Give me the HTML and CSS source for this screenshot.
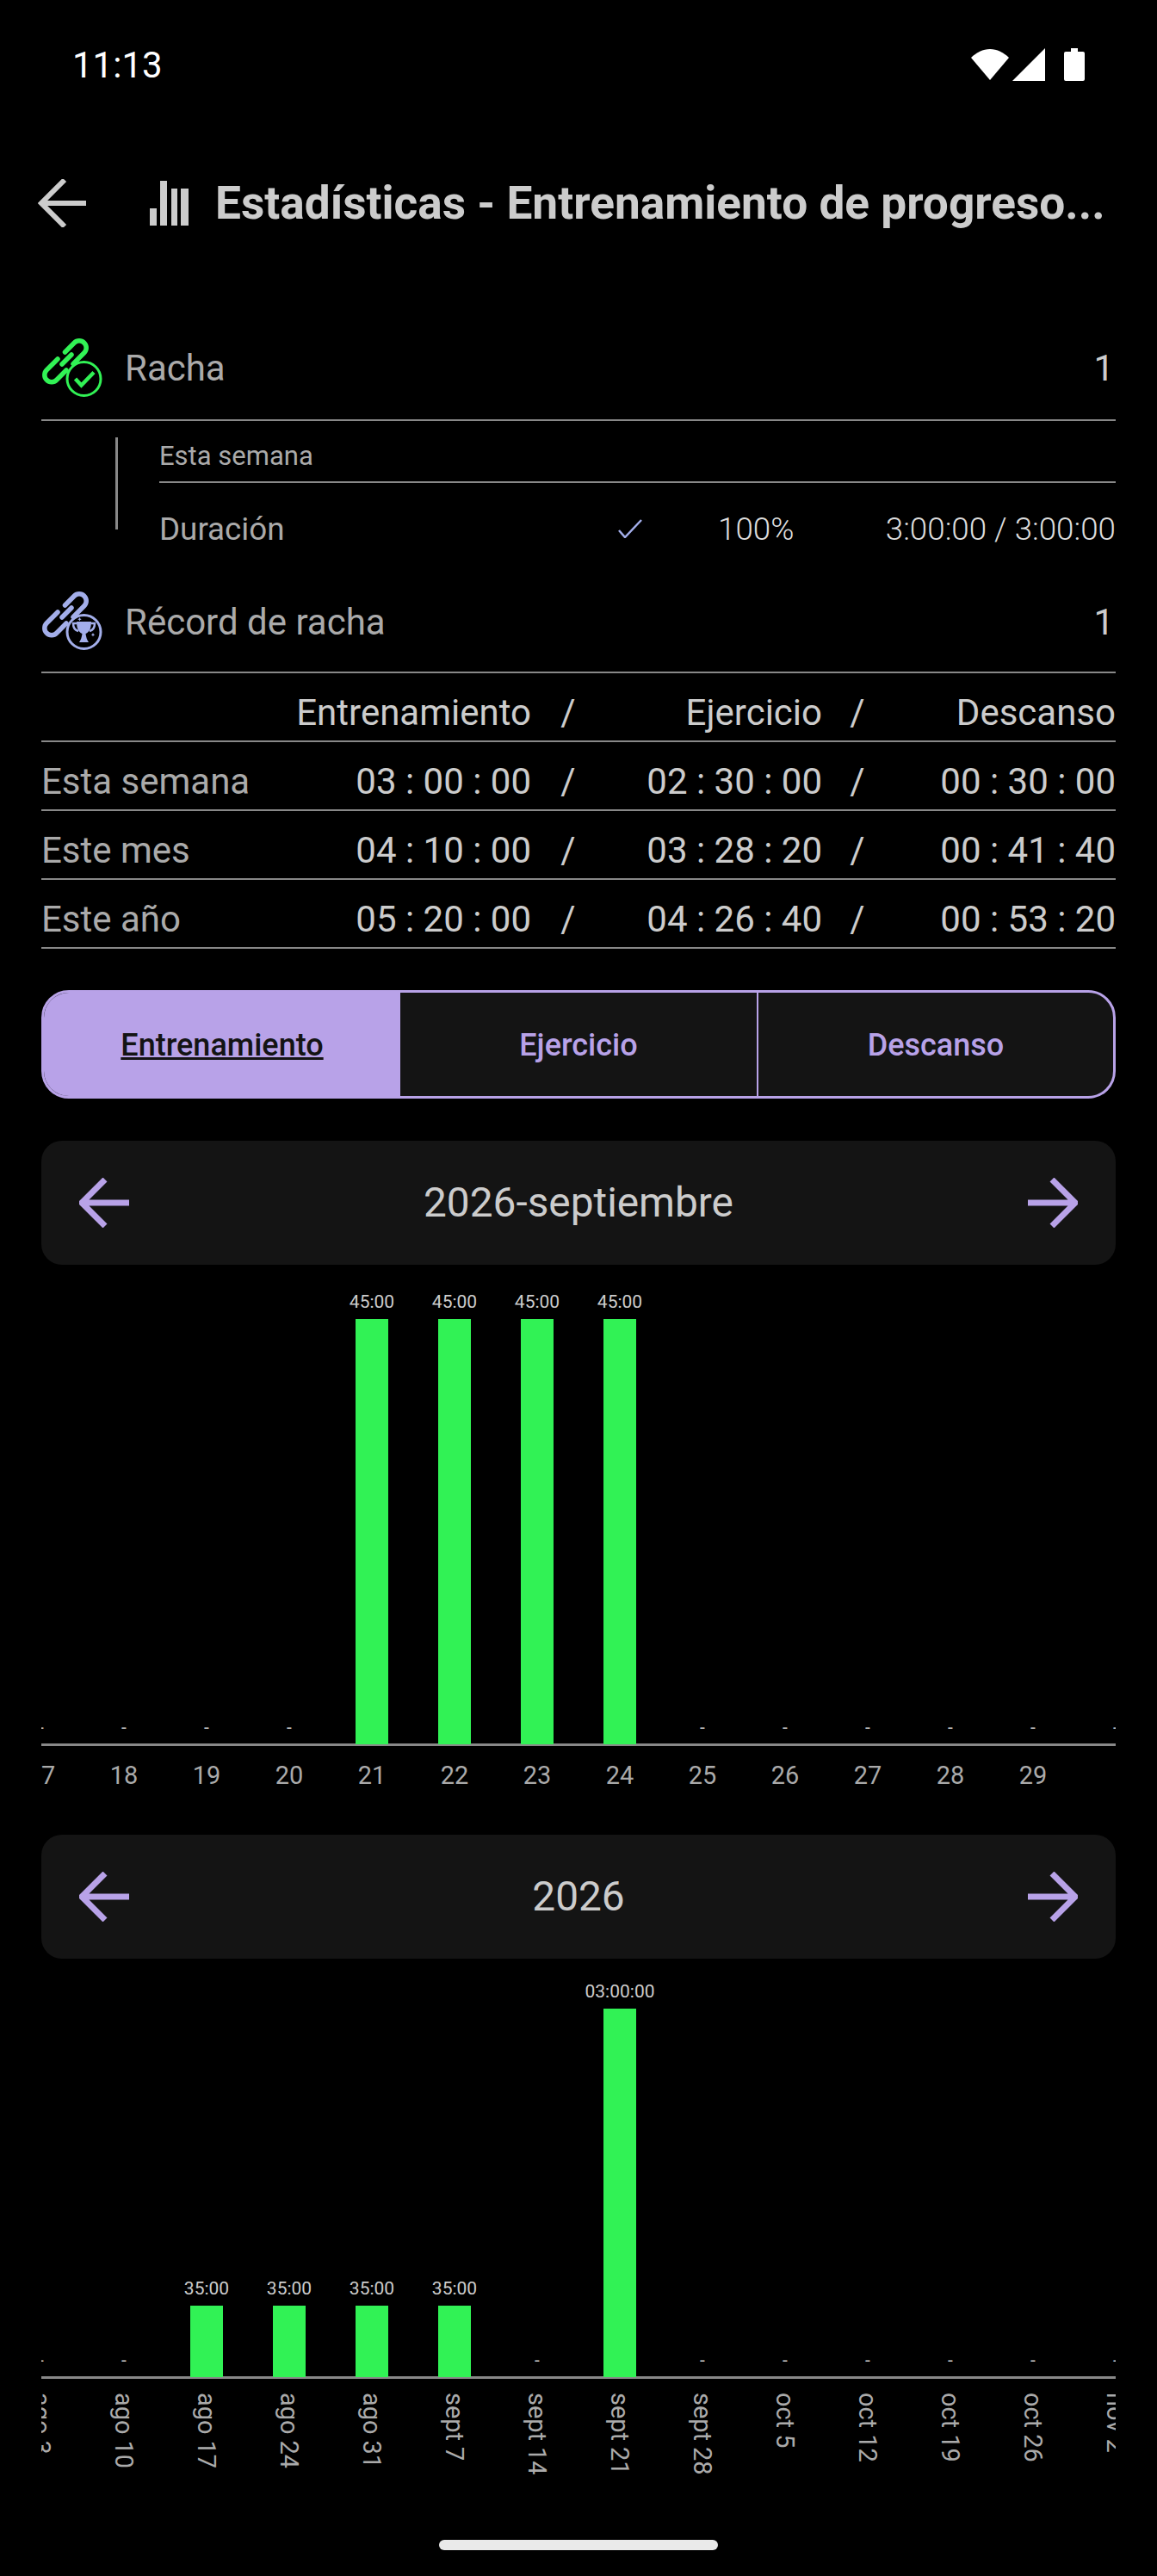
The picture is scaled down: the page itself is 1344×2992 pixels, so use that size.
FILE: index.html
```html
<!DOCTYPE html>
<html lang="es">
<head>
    <meta charset="UTF-8">
    <meta name="viewport" content="width=device-width, initial-scale=1.0">
    <title>Estadísticas</title>
    <link rel="stylesheet" href="styles.css">
</head>
<body>

    <div class="status-bar">
        <span class="clock">11:13</span>
        <div class="status-icons">
            <svg class="icon-wifi" viewBox="0 0 44 36"><path d="M22 36 0 10C6 4 14 0 22 0s16 4 22 10z"/></svg>
            <svg class="icon-signal" viewBox="0 0 38 38"><path d="M38 0v38H0z"/></svg>
            <svg class="icon-battery" viewBox="0 0 24 38"><path d="M8 0h8v4h6q2 0 2 2v30q0 2-2 2H2q-2 0-2-2V6q0-2 2-2h6z"/></svg>
        </div>
    </div>

    <div class="app-bar">
        <svg class="icon-back" viewBox="0 0 56 56"><path d="M31 1 4 28l27 27M4 28h52"/></svg>
        <svg class="icon-bars" viewBox="0 0 45 52"><path d="M0 32h8v20H0zM12 0h8v52h-8zM25 9h7v43h-7zM36 9h9v43h-9z"/></svg>
        <h1 class="title">Estadísticas - Entrenamiento de progreso...</h1>
    </div>

    <main class="content">
        <div class="streak-row">
            <svg class="streak-icon streak-green" viewBox="0 0 72 72">
                <path class="chain" d="M27.500 17 38.200 6.200A8.200 8.200 0 0 1 49.800 17.800L37 30.600M6.200 37.700 19 25M17.800 49.300 29 38M6.200 37.700A8.200 8.200 0 0 0 17.800 49.300M24 31 35 20"/>
                <circle class="badge" cx="49.500" cy="48" r="19.500"/>
                <path class="tick" d="M39.500 48 46.500 55.500 61 40.500"/>
            </svg>
            <span class="streak-label">Racha</span>
            <span class="streak-value">1</span>
        </div>

        <div class="week">
            <div class="week-line"></div>
            <div class="week-body">
                <div class="week-head">Esta semana</div>
                <div class="week-row">
                    <span class="goal-name">Duración</span>
                    <svg class="goal-check" viewBox="0 0 28 22"><path d="M1 13 8 21 27 1"/></svg>
                    <span class="goal-percent">100%</span>
                    <span class="goal-time">3:00:00 / 3:00:00</span>
                </div>
            </div>
        </div>

        <div class="streak-row streak-best">
            <svg class="streak-icon streak-blue" viewBox="0 0 72 72">
                <path class="chain" d="M27.500 17 38.200 6.200A8.200 8.200 0 0 1 49.800 17.800L37 30.600M6.200 37.700 19 25M17.800 49.300 29 38M6.200 37.700A8.200 8.200 0 0 0 17.800 49.300M24 31 35 20"/>
                <circle class="badge" cx="49.500" cy="48" r="19.500"/>
                <path class="cup" d="M41 36h17c0 8-2 12-6.500 14 .5 4 1.500 7 3.500 10H44c2-3 3-6 3.500-10C43 48 41 44 41 36z"/>
                <path class="cup-handle" d="M41 38h-4c0 5 2 8 6 9M58 38h4c0 5-2 8-6 9"/>
                <path class="sparkle" d="M44.500 31l.7 1.500 1.500.7-1.500.7-.7 1.500-.7-1.500-1.500-.7 1.500-.7zM60 49l.7 1.500 1.500.7-1.500.7-.7 1.500-.7-1.500-1.500-.7 1.500-.7z"/>
            </svg>
            <span class="streak-label">Récord de racha</span>
            <span class="streak-value">1</span>
        </div>

        <div class="totals">
            <div class="totals-row">
                <span></span><span class="num">Entrenamiento</span><span class="sep">/</span><span class="num">Ejercicio</span><span class="sep">/</span><span class="num">Descanso</span>
            </div>
            <div class="totals-row">
                <span class="row-name">Esta semana</span><span class="num">03 : 00 : 00</span><span class="sep">/</span><span class="num">02 : 30 : 00</span><span class="sep">/</span><span class="num">00 : 30 : 00</span>
            </div>
            <div class="totals-row">
                <span class="row-name">Este mes</span><span class="num">04 : 10 : 00</span><span class="sep">/</span><span class="num">03 : 28 : 20</span><span class="sep">/</span><span class="num">00 : 41 : 40</span>
            </div>
            <div class="totals-row">
                <span class="row-name">Este año</span><span class="num">05 : 20 : 00</span><span class="sep">/</span><span class="num">04 : 26 : 40</span><span class="sep">/</span><span class="num">00 : 53 : 20</span>
            </div>
        </div>

        <div class="tabs">
            <div class="tab tab-active">Entrenamiento</div>
            <div class="tab">Ejercicio</div>
            <div class="tab">Descanso</div>
        </div>

        <div class="pager">
            <svg class="pager-arrow" viewBox="0 0 58 58"><path d="M30 2 3 29l27 27M3 29h55"/></svg>
            <span class="pager-title">2026-septiembre</span>
            <svg class="pager-arrow" viewBox="0 0 58 58"><path d="M28 2l27 27-27 27M55 29H0"/></svg>
        </div>

        <div class="chart chart-days" id="chart-days"></div>

        <div class="pager pager-year">
            <svg class="pager-arrow" viewBox="0 0 58 58"><path d="M30 2 3 29l27 27M3 29h55"/></svg>
            <span class="pager-title">2026</span>
            <svg class="pager-arrow" viewBox="0 0 58 58"><path d="M28 2l27 27-27 27M55 29H0"/></svg>
        </div>

        <div class="chart chart-weeks" id="chart-weeks"></div>
    </main>

    <div class="home-bar"></div>

    <script>
        // label under the axis, value over the bar, bar height in px
        const days = [
            ['17', '-', 0], ['18', '-', 0], ['19', '-', 0], ['20', '-', 0],
            ['21', '45:00', 494], ['22', '45:00', 494], ['23', '45:00', 494], ['24', '45:00', 494],
            ['25', '-', 0], ['26', '-', 0], ['27', '-', 0], ['28', '-', 0], ['29', '-', 0], ['', '-', 0]
        ];
        const weeks = [
            ['ago 3', '-', 0], ['ago 10', '-', 0], ['ago 17', '35:00', 83], ['ago 24', '35:00', 83],
            ['ago 31', '35:00', 83], ['sept 7', '35:00', 83], ['sept 14', '-', 0], ['sept 21', '03:00:00', 428],
            ['sept 28', '-', 0], ['oct 5', '-', 0], ['oct 12', '-', 0], ['oct 19', '-', 0], ['oct 26', '-', 0], ['nov 2', '-', 0]
        ];

        function drawChart(id, data) {
            const columns = data.map(([label, value, height]) => `
                <div class="column">
                    <div class="plot">
                        <span class="value">${value}</span>
                        <div class="bar" style="height: ${height}px"></div>
                    </div>
                    <span class="tick-label">${label}</span>
                </div>`);
            document.getElementById(id).innerHTML = `<div class="columns">${columns.join('')}</div>`;
        }

        drawChart('chart-days', days);
        drawChart('chart-weeks', weeks);
    </script>

</body>
</html>
```

FILE: styles.css
```css
body {
    background-color: #000000;
    color: #cccccc;
    font-family: 'Roboto', sans-serif;
    font-weight: 400;
    font-size: 42px;
    margin: 0;
    height: 2992px;
    overflow: hidden;
    position: relative;
}

/* Status bar */
.status-bar {
    height: 150px;
    display: flex;
    align-items: center;
    justify-content: space-between;
    padding: 0 84px;
}

.clock {
    color: #ffffff;
    font-size: 42px;
}

.status-icons {
    display: flex;
    align-items: center;
    gap: 4px;
    fill: #ffffff;
}

.icon-wifi { width: 44px; height: 36px; }
.icon-signal { width: 38px; height: 38px; margin-right: 18px; }
.icon-battery { width: 24px; height: 38px; }

/* App bar */
.app-bar {
    height: 172px;
    display: flex;
    align-items: center;
    padding-left: 44px;
}

.icon-back {
    width: 56px;
    height: 56px;
    fill: none;
    stroke: #cccccc;
    stroke-width: 6;
    margin-right: 74px;
}

.icon-bars {
    width: 45px;
    height: 52px;
    fill: #cccccc;
    margin-right: 31px;
}

.title {
    margin: 0;
    font-size: 53.2px;
    font-weight: 700;
    color: #cccccc;
    white-space: nowrap;
}

.content {
    padding: 46px 48px 0;
}

/* Streak rows */
.streak-row {
    height: 119px;
    display: flex;
    align-items: center;
    gap: 25px;
    border-bottom: 2px solid #888888;
}

.streak-best {
    height: 110px;
    padding-bottom: 3px;
}

.streak-icon {
    width: 72px;
    height: 72px;
    fill: none;
}

.chain {
    stroke-width: 5.5;
    stroke-linecap: round;
}

.badge {
    fill: #000000;
    stroke-width: 3;
}

.streak-green .chain, .streak-green .badge, .streak-green .tick { stroke: #31f255; }
.streak-blue .chain, .streak-blue .badge { stroke: #a3aeea; }

.tick {
    stroke-width: 4.5;
}

.cup { fill: #a3aeea; }
.cup-handle { stroke: #a3aeea; stroke-width: 2.5; }
.sparkle { fill: #a3aeea; }

.streak-label {
    flex: 1;
    color: #aaaaaa;
}

.streak-value {
    color: #cccccc;
    padding-right: 2px;
}

/* This week's goal */
.week {
    display: flex;
    padding-top: 19px;
    padding-left: 86px;
}

.week-line {
    width: 3px;
    height: 107px;
    background-color: #888888;
    margin-right: 48px;
}

.week-body {
    flex: 1;
}

.week-head {
    height: 51px;
    line-height: 44px;
    font-size: 31px;
    color: #aaaaaa;
    border-bottom: 2px solid #888888;
}

.week-row {
    height: 106px;
    display: flex;
    align-items: center;
    font-size: 36.75px;
}

.goal-name {
    width: 533px;
    color: #aaaaaa;
}

.goal-check {
    width: 28px;
    height: 22px;
    fill: none;
    stroke: #a3aeea;
    stroke-width: 2.5;
}

.goal-percent {
    margin-left: 88px;
    font-weight: 300;
    color: #dddddd;
}

.goal-time {
    margin-left: auto;
    font-weight: 300;
    color: #dddddd;
}

/* Totals table */
.totals-row {
    display: grid;
    grid-template-columns: 220px 349px 86px 252px 82px 259px;
    align-items: center;
    padding-top: 12px;
    box-sizing: border-box;
    border-bottom: 2px solid #888888;
    height: 80px;
    white-space: nowrap;
}

.row-name { color: #aaaaaa; }
.num { text-align: right; }
.sep { text-align: center; }

/* Tabs */
.tabs {
    display: grid;
    grid-template-columns: 414px 414px 1fr;
    height: 126px;
    margin-top: 48px;
    box-sizing: border-box;
    border: 3px solid #b8a2e8;
    border-radius: 32px;
    background-color: #141414;
    overflow: hidden;
    font-size: 36px;
    font-weight: 500;
    color: #b8a2e8;
}

.tab {
    display: flex;
    align-items: center;
    justify-content: center;
    padding-top: 2px;
}

.tab + .tab + .tab {
    border-left: 2px solid #b8a2e8;
}

.tab-active {
    background-color: #b8a2e8;
    color: #141414;
    text-decoration: underline;
}

/* Month and year pagers */
.pager {
    height: 144px;
    margin-top: 49px;
    display: flex;
    align-items: center;
    justify-content: space-between;
    padding: 0 44px;
    background-color: #141414;
    border-radius: 24px;
}

.pager-year {
    margin-top: 0;
}

.pager-arrow {
    width: 58px;
    height: 58px;
    fill: none;
    stroke: #b8a2e8;
    stroke-width: 7;
}

.pager-title {
    font-size: 47.8px;
    color: #cccccc;
}

/* Bar charts, the first and last columns are cut in half at the edges */
.chart {
    overflow: hidden;
}

.columns {
    display: grid;
    grid-template-columns: repeat(14, 96px);
    margin-left: -48px;
}

.column {
    display: flex;
    flex-direction: column;
    align-items: center;
}

.plot {
    width: 100%;
    display: flex;
    flex-direction: column;
    align-items: center;
    justify-content: flex-end;
    box-sizing: border-box;
    border-bottom: 3px solid #888888;
}

.chart-days {
    height: 662px;
}

.chart-days .plot { height: 559px; }
.chart-weeks .plot { height: 488px; }

.value {
    font-size: 21px;
    line-height: 26px;
    margin-bottom: 7px;
    white-space: nowrap;
    color: #cccccc;
}

.bar {
    width: 38px;
    background-color: #31f255;
    margin-bottom: -1px;
}

.tick-label {
    font-size: 28.9px;
    color: #aaaaaa;
    line-height: 34px;
    padding-top: 17px;
}

.chart-weeks .tick-label {
    writing-mode: vertical-rl;
    padding-top: 16px;
    white-space: nowrap;
}

/* Gesture bar */
.home-bar {
    position: absolute;
    left: 510px;
    top: 2950px;
    width: 324px;
    height: 12px;
    background-color: #eaeaea;
    border-radius: 6px;
}
```
